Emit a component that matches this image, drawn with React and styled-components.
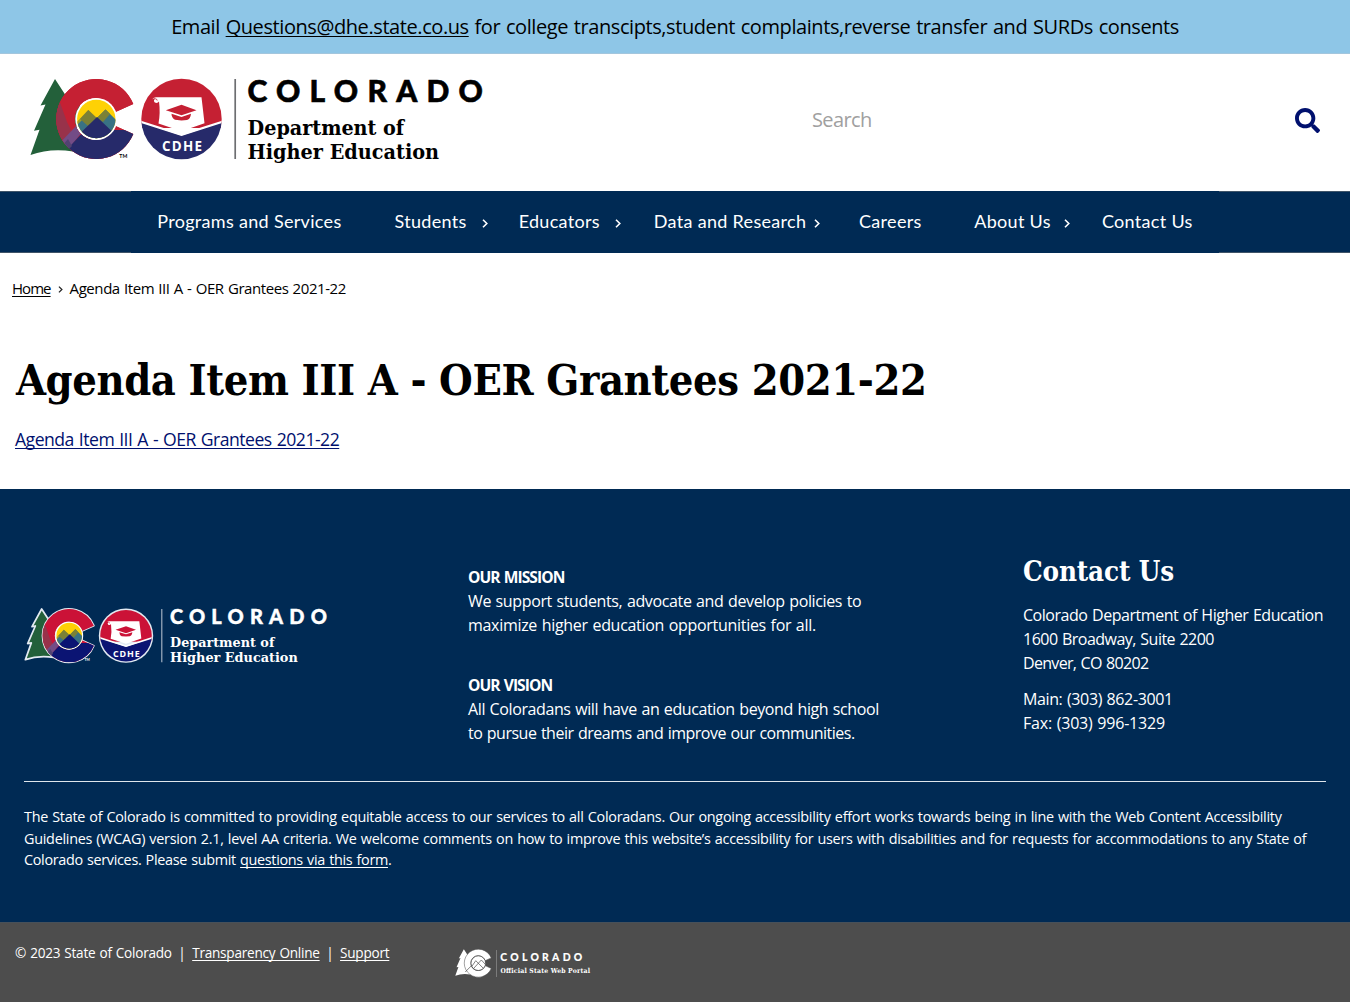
import React from "react";
import styled, { createGlobalStyle } from "styled-components";
import { FaSearch } from "react-icons/fa";

const navy = "#002a54";
const sans = '"Open Sans", "Noto Sans", sans-serif';
const slab = '"DejaVu Serif Condensed", "DejaVu Serif", serif';

const GlobalStyle = createGlobalStyle`
  * { box-sizing: border-box; }
  body { margin: 0; background: #fff; color: #000; font-family: ${sans}; word-spacing: 0.05em; }
  h1, h2, p { margin: 0; }
  a { color: inherit; text-underline-offset: 1.5px; text-decoration-thickness: 1px; text-decoration-skip-ink: none; }
`;

const Page = styled.div`
  width: 1350px;
  white-space: nowrap;
`;

const Banner = styled.div`
  height: 54px;
  background: #8ec6e7;
  border-bottom: 1px solid #a3c6dd;
  font-size: 20px;
  line-height: 54px;
  text-align: center;
  word-spacing: 1px;
  letter-spacing: -0.42px;
`;

const Header = styled.header`
  height: 137px;
  display: flex;
  justify-content: space-between;
  padding: 22px 30px 0;
`;

const SearchForm = styled.form`
  display: flex;
  align-items: center;
  justify-content: space-between;
  width: 508px;
  height: 88px;
  color: #00106e;
  svg { display: block; }
`;

const SearchInput = styled.input`
  border: 0;
  padding: 0;
  outline: 0;
  width: 420px;
  background: transparent;
  font: 20px/28px ${sans};
  letter-spacing: -0.6px;
  &::placeholder { color: #a0a0a0; opacity: 1; }
`;

const NavBar = styled.nav`
  height: 62px;
  background: ${navy};
  border-top: 1px solid #3f5468;
  border-bottom: 1px solid #3f5468;
  display: flex;
  justify-content: center;
`;

const Menu = styled.div`
  display: flex;
  margin: -1px 0;
  background: ${navy};
`;

const NavItem = styled.div`
  display: flex;
  align-items: center;
  padding-left: 26.7px;
  padding-bottom: 2px;
  color: #fff;
  font: 18px/24px Lato, sans-serif;
  letter-spacing: 0.31px;
  word-spacing: 0;
`;

const NavLabel = styled.span`
  width: ${(p) => p.$w}px;
`;

const ChevronSlot = styled.span`
  width: 26.5px;
  padding-top: 5px;
  padding-left: ${(p) => p.$inset || 0}px;
  svg { display: block; }
`;

const Breadcrumb = styled.div`
  height: 70px;
  padding-left: 12px;
  display: flex;
  align-items: center;
  gap: 7px;
  font-size: 15px;
  letter-spacing: -0.43px;
  word-spacing: 0.75px;
  a { letter-spacing: -0.95px; }
  svg { margin-top: 3px; }
`;

const Main = styled.main`
  height: 166px;
  padding: 27px 15px 0;
`;

const Title = styled.h1`
  font: bold 43px/60px ${slab};
  letter-spacing: -0.4px;
  word-spacing: 0;
  padding-left: 1px;
`;

const DocLink = styled.a`
  display: inline-block;
  margin-top: 15.5px;
  font-size: 17.6px;
  line-height: 26px;
  letter-spacing: -0.5px;
  word-spacing: 0.88px;
  color: #00106e;
`;

const Footer = styled.footer`
  height: 433px;
  background: ${navy};
  color: #fff;
  padding: 0 24px;
`;

const FooterColumns = styled.div`
  height: 293px;
  display: grid;
  grid-template-columns: 444px 555px 1fr;
  border-bottom: 1px solid #dfe6ec;
  font-size: 16px;
  line-height: 24px;
`;

const FooterLogo = styled.div`
  padding: 118px 0 0 0.5px;
`;

const Statements = styled.div`
  padding-top: 76px;
  display: flex;
  flex-direction: column;
  gap: 36px;
`;

const Label = styled.strong`
  display: block;
  font-size: 15.6px;
  font-weight: 700;
  letter-spacing: -0.92px;
`;

const Line = styled.span`
  display: block;
  letter-spacing: ${(p) => p.$track}px;
  word-spacing: 0.8px;
`;

const Contact = styled.div`
  padding-top: 61px;
  p + p { margin-top: 12px; }
`;

const ContactTitle = styled.h2`
  font: bold 27.5px/42px ${slab};
  letter-spacing: -0.13px;
  margin-bottom: 11px;
  word-spacing: 0;
`;

const Statement = styled.p`
  padding-top: 24px;
  font-size: 14.4px;
  line-height: 21.6px;
  letter-spacing: -0.27px;
  word-spacing: 0.72px;
`;

const BottomBar = styled.div`
  height: 80px;
  background: #4d4d4d;
  border-top: 1px solid #475059;
  color: #fff;
  display: flex;
  padding: 20px 15px 0;
  font-size: 13.6px;
  line-height: 20px;
  letter-spacing: -0.25px;
`;

const Legal = styled.div`
  width: 439px;
  display: flex;
  gap: 6.6px;
`;

const PortalLogo = styled.div`
  padding-top: 5px;
`;

const LogoSvg = styled.svg`
  display: block;
  overflow: visible;
  letter-spacing: 0;
  word-spacing: 0;
`;

const CPath = "M133.3 104 A40 40 0 1 0 133.3 134 L115.5 126 A21 21 0 1 1 115.5 112 Z";
const TreePath = "M55 79 L40.5 105.5 L45.5 104.5 L34 130.8 L39.5 129.8 L30.5 155 Q50 148 73 151.5 L80 105 L68 99 Z";

function AgencyLogo({ width, height, id, light }) {
  const ink = light ? "#fff" : "#000";
  const rim = light ? { stroke: "#e3eaf2", strokeWidth: 2.6, strokeLinejoin: "round" } : {};
  const red = light ? "#cb1237" : "#c52033";
  const blue = light ? "#0b1473" : "#262a6a";
  return (
    <LogoSvg width={width} height={height} viewBox="30 76 456 90">
      <defs>
        <clipPath id={id + "c"}><path d={CPath} /></clipPath>
        <clipPath id={id + "s"}><circle cx="96.3" cy="119" r="19.2" /></clipPath>
        <clipPath id={id + "r"}><circle cx="181.5" cy="119" r={light ? 38.6 : 40.2} /></clipPath>
      </defs>
      <path d={TreePath} fill="#23603a" {...rim} />
      <path d={CPath} fill={red} {...rim} />
      <g clipPath={`url(#${id}c)`}>
        <rect x="50" y="76" width="90" height="90" fill={red} />
        <path d="M50 108 L58 97 L62 108 L67 122 L72 132 L60 145 L50 151Z" fill="#98324a" />
        <path d="M55 148 L78 124 L82 132 L68 150Z" fill="#734c86" />
        <path d="M60 157 L85 130 H140 V166 H60Z" fill={blue} />
        <path d="M61 147 L68 139 L72 146 L67 151Z" fill="#514372" />
      </g>
      <circle cx="96.3" cy="119" r="21" fill="#fff" />
      <g clipPath={`url(#${id}s)`}>
        <rect x="76" y="98" width="42" height="42" fill="#fed105" />
        <path d="M74 125 L88.3 110 L97 118 L105.5 109.5 L120 124 V140 H74Z" fill="#a49a29" />
        <path d="M74 128 L83 119 L93 127 L97 118 L105.5 109.5 L120 124 V140 H74Z" fill="#397284" />
        <path d="M88.3 110 L96.5 118 L88 126 L80 119Z" fill="#7b8136" />
        <path d="M97 118 L105.5 109.5 L110 114 L103 122Z" fill="#7b8136" />
        <path d="M74 139 L97 117 L120 139 V142 H74Z" fill={blue} />
      </g>
      <text x="119.3" y="157.5" fontFamily="Lato, sans-serif" fontWeight="700" fontSize="5.2" textLength="8" fill={ink}>TM</text>

      {light && <circle cx="181.5" cy="119" r="40.8" fill="#e3eaf2" />}
      <g clipPath={`url(#${id}r)`}>
        <rect x="140" y="78" width="84" height="50" fill={red} />
        <path d="M140 122 L181.5 135.5 L223 122 V162 H140Z" fill={blue} />
        <path d="M140 121.5 L181.5 134.8 L223 121.5" fill="none" stroke="#fff" strokeWidth="2.2" />
        <path d="M156 97.3 H201.5 Q203 110 204.5 123.2 L181.5 131.3 L158.5 123.5 Q160.5 113 159 101.5 Q157.5 103.8 154.8 102.5 Q153 100.5 155 99 L157 100 Q156.5 101.5 155.7 101 Q159 101 156.5 98.8 Q153.5 97.4 152 99.8 Q152.8 97.4 156 97.3Z" fill="#fff" />
        <path d="M165.8 110.2 L181.5 104.7 L196.5 110.2 L181.5 115.3Z M171.5 113.8 L181.5 117 L191 113.8 Q190.5 119 187 120 L181.5 120.4 L175 119.8 Q171.5 118 171.5 113.8Z" fill={red} />
      </g>
      <text x="162" y="150.8" fontFamily="Open Sans, sans-serif" fontWeight="700" fontSize="13.4" textLength="40" fill="#fff">CDHE</text>

      <path d="M235.2 79 V159" stroke={light ? "#a9b8c8" : "#6d6e71"} strokeWidth="1.7" />
      <g fill={ink}>
        <text x="247.4" y="101.6" fontFamily="Lato, sans-serif" fontWeight="900" fontSize="30" stroke={ink} strokeWidth="0.6" textLength="235.5" lengthAdjust="spacing">COLORADO</text>
        <g fontFamily="DejaVu Serif Condensed, DejaVu Serif, serif" fontWeight="700" fontSize="20.5">
          <text x="247.6" y="135.3" textLength="156.5" lengthAdjust="spacingAndGlyphs">Department of</text>
          <text x="247.6" y="158.7" textLength="191.5" lengthAdjust="spacingAndGlyphs">Higher Education</text>
        </g>
      </g>
    </LogoSvg>
  );
}

function StatePortalLogo() {
  return (
    <LogoSvg width="140" height="30" viewBox="454 947 140 30">
      <g transform="translate(444.6 920.5) scale(0.35)">
        <path d={TreePath} fill="#fff" />
        <path d={CPath} fill="#fff" stroke="#4d4d4d" strokeWidth="1.5" />
        <path d="M59 144 L80 123" stroke="#4d4d4d" strokeWidth="2" />
        <circle cx="96.3" cy="119" r="21" fill="#fff" stroke="#4d4d4d" strokeWidth="2.4" />
        <path d="M78 128 L89 112 L111 134 M82 135 L105 110 L116 122" fill="none" stroke="#4d4d4d" strokeWidth="2" />
      </g>
      <path d="M496.5 949 V976" stroke="#888" strokeWidth="0.8" />
      <text x="500.3" y="960.2" fill="#fff" fontFamily="Lato, sans-serif" fontWeight="900" fontSize="10.4" stroke="#fff" strokeWidth="0.1" textLength="82">COLORADO</text>
      <text x="500.5" y="971.7" fill="#fff" fontFamily="DejaVu Serif Condensed, DejaVu Serif, serif" fontWeight="700" fontSize="6.8" textLength="89.5">Official State Web Portal</text>
    </LogoSvg>
  );
}

const Chevron = ({ color = "#fff", w = 6, h = 9 }) => (
  <svg width={w} height={h} viewBox="0 0 6 9" fill="none" stroke={color} strokeWidth="1.6">
    <path d="M1 0.8 L4.8 4.5 L1 8.2" />
  </svg>
);

const links = [
  { text: "Programs and Services", w: 184 },
  { text: "Students", w: 71, chevron: 16.5 },
  { text: "Educators", w: 82, chevron: 14.5 },
  { text: "Data and Research", w: 152, chevron: 8 },
  { text: "Careers", w: 62 },
  { text: "About Us", w: 74.5, chevron: 15 },
  { text: "Contact Us", w: 91 },
];

export default function App() {
  return (
    <Page>
      <GlobalStyle />
      <Banner>
        Email <a href="#mail">Questions@dhe.state.co.us</a> for college transcipts,student complaints,reverse transfer and SURDs consents
      </Banner>
      <Header>
        <AgencyLogo width={456} height={90} id="top" />
        <SearchForm>
          <SearchInput placeholder="Search" />
          <FaSearch size={25} />
        </SearchForm>
      </Header>
      <NavBar>
        <Menu>
          {links.map((l) => (
            <NavItem key={l.text}>
              <NavLabel $w={l.w}>{l.text}</NavLabel>
              <ChevronSlot $inset={l.chevron}>{l.chevron && <Chevron />}</ChevronSlot>
            </NavItem>
          ))}
        </Menu>
      </NavBar>
      <Breadcrumb>
        <a href="#home">Home</a>
        <Chevron color="#222" w={5} h={7} />
        <span>Agenda Item III A - OER Grantees 2021-22</span>
      </Breadcrumb>
      <Main>
        <Title>Agenda Item III A - OER Grantees 2021-22</Title>
        <DocLink href="#doc">Agenda Item III A - OER Grantees 2021-22</DocLink>
      </Main>
      <Footer>
        <FooterColumns>
          <FooterLogo>
            <AgencyLogo width={304} height={60} id="foot" light />
          </FooterLogo>
          <Statements>
            <p>
              <Label>OUR MISSION</Label>
              <Line $track={-0.37}>We support students, advocate and develop policies to</Line>
              <Line $track={-0.3}>maximize higher education opportunities for all.</Line>
            </p>
            <p>
              <Label>OUR VISION</Label>
              <Line $track={-0.39}>All Coloradans will have an education beyond high school</Line>
              <Line $track={-0.49}>to pursue their dreams and improve our communities.</Line>
            </p>
          </Statements>
          <Contact>
            <ContactTitle>Contact Us</ContactTitle>
            <p>
              <Line $track={-0.46}>Colorado Department of Higher Education</Line>
              <Line $track={-0.52}>1600 Broadway, Suite 2200</Line>
              <Line $track={-0.68}>Denver, CO 80202</Line>
            </p>
            <p>
              <Line $track={-0.38}>Main: (303) 862-3001</Line>
              <Line $track={-0.2}>Fax: (303) 996-1329</Line>
            </p>
          </Contact>
        </FooterColumns>
        <Statement>
          The State of Colorado is committed to providing equitable access to our services to all Coloradans. Our ongoing accessibility effort works towards being in line with the Web Content Accessibility<br />
          Guidelines (WCAG) version 2.1, level AA criteria. We welcome comments on how to improve this website’s accessibility for users with disabilities and for requests for accommodations to any State of<br />
          <Line as="span" $track={-0.32}>Colorado services. Please submit <a href="#form">questions via this form</a>.</Line>
        </Statement>
      </Footer>
      <BottomBar>
        <Legal>
          <span>© 2023 State of Colorado</span>
          <span>|</span>
          <a href="#transparency">Transparency Online</a>
          <span>|</span>
          <a href="#support">Support</a>
        </Legal>
        <PortalLogo><StatePortalLogo /></PortalLogo>
      </BottomBar>
    </Page>
  );
}
